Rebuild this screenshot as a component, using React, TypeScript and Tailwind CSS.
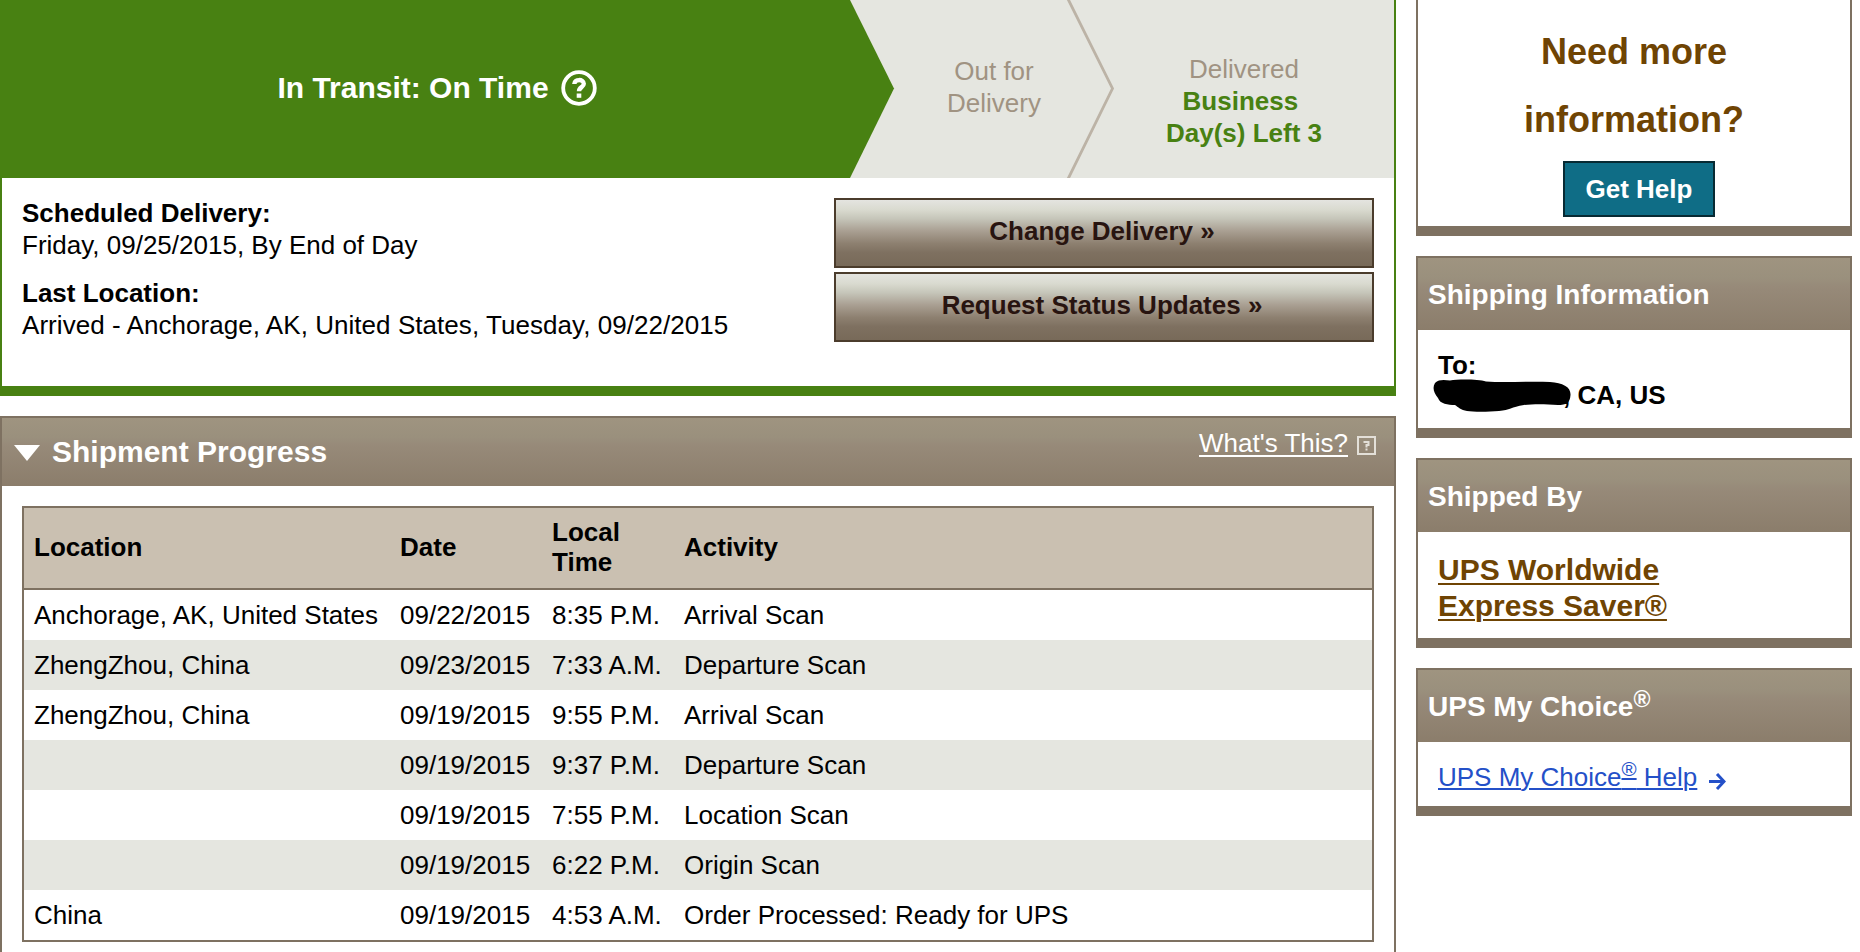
import React from 'react';
import clsx from 'clsx';

interface Scan {
    location?: string;
    date: string;
    time: string;
    activity: string;
}

const scans: Scan[] = [
    { location: 'Anchorage, AK, United States', date: '09/22/2015', time: '8:35 P.M.', activity: 'Arrival Scan' },
    { location: 'ZhengZhou, China', date: '09/23/2015', time: '7:33 A.M.', activity: 'Departure Scan' },
    { location: 'ZhengZhou, China', date: '09/19/2015', time: '9:55 P.M.', activity: 'Arrival Scan' },
    { date: '09/19/2015', time: '9:37 P.M.', activity: 'Departure Scan' },
    { date: '09/19/2015', time: '7:55 P.M.', activity: 'Location Scan' },
    { date: '09/19/2015', time: '6:22 P.M.', activity: 'Origin Scan' },
    { location: 'China', date: '09/19/2015', time: '4:53 A.M.', activity: 'Order Processed: Ready for UPS' },
];

const GradientButton = ({ label }: { label: string }) => (
    <button className="h-[70px] w-full border-2 border-[#4b3c2c] bg-[linear-gradient(#e4e4e0_0%,#d9dacf_15%,#c6c6ba_28%,#a99f92_47%,#8d8070_66%,#7e7060_80%,#786a59_100%)] pr-1 pb-1 text-center font-bold text-[#281410]">
        {label}
    </button>
);

const StatusBar = () => (
    <div className="relative flex h-[178px] bg-[#e5e6e0]">
        <svg className="absolute inset-0" width="1392" height="178" viewBox="0 0 1392 178">
            <path d="M0 0H848L892 88.5L848 178H0Z" fill="#488112" />
            <path d="M1065.500 -2L1110.500 88.500L1065.500 180" fill="none" stroke="#bcb3a6" strokeWidth="2.800" />
        </svg>
        <div className="relative flex w-[892px] items-center justify-center pr-[22px] pb-[3px] text-[30px] font-bold text-white">
            <span>In Transit: On Time</span>
            <svg className="ml-3" width="36" height="36" viewBox="0 0 36 36" fill="none" stroke="#fff">
                <circle cx="18" cy="18" r="15.800" strokeWidth="3.800" />
                <path d="M13.300 14C13.300 8.800 22.800 8.800 22.800 13.800C22.800 17.300 18 17 18 21.200" strokeWidth="4.400" />
                <path d="M18 23.500V27.800" strokeWidth="4.600" />
            </svg>
        </div>
        <div className="relative w-[200px] pt-[55px] text-center text-[#a09382]">
            Out for
            <br />
            Delivery
        </div>
        <div className="relative w-[300px] pt-[53px] text-center text-[#a09382]">
            Delivered
            <div className="font-bold text-[#488112]">
                Business&nbsp;
                <br />
                Day(s) Left 3
            </div>
        </div>
    </div>
);

const Summary = () => (
    <section className="h-[396px] border-x-2 border-b-[10px] border-[#488112]">
        <StatusBar />
        <div className="flex justify-between pl-5 pr-5">
            <div className="pt-[19px]">
                <p className="font-bold">Scheduled Delivery:</p>
                <p>Friday, 09/25/2015, By End of Day</p>
                <p className="mt-4 font-bold">Last Location:</p>
                <p className="tracking-[0.05px]">Arrived - Anchorage, AK, United States, Tuesday, 09/22/2015</p>
            </div>
            <div className="flex w-[540px] flex-col gap-1 pt-5">
                <GradientButton label="Change Delivery »" />
                <GradientButton label="Request Status Updates »" />
            </div>
        </div>
    </section>
);

const Progress = () => (
    <section className="mt-5 h-[560px] border-2 border-[#7e7161]">
        <header className="flex h-[68px] justify-between bg-[linear-gradient(#9f9480_0%,#9a907d_28%,#978a79_40%,#8b7d6b_100%)] pl-3 pr-[18px] text-white">
            <div className="flex items-center">
                <svg className="mt-px" width="26" height="16" viewBox="0 0 26 16">
                    <path d="M0 0H26L13 16Z" fill="#fff" />
                </svg>
                <h2 className="ml-3 text-[30px] font-bold">Shipment Progress</h2>
            </div>
            <div className="flex items-start pt-[9px]">
                <a className="underline decoration-2 underline-offset-[3px]">What's This?</a>
                <svg className="ml-[9px] mt-[9px]" width="19" height="19" viewBox="0 0 19 19" fill="none" stroke="#e3dfd8">
                    <rect x="1" y="1" width="17" height="17" strokeWidth="2" />
                    <path d="M6.500 6H11.500V9H9.500V11.500" strokeWidth="2" />
                    <path d="M9.500 12.500V14.500" strokeWidth="2" />
                </svg>
            </div>
        </header>
        <div className="px-5 pt-5">
            <table className="w-full table-fixed border-separate border-spacing-0 border-2 border-[#7e7161]">
                <thead>
                    <tr className="h-[82px] bg-[#cac0b1] text-left leading-[30px]">
                        <th className="w-[376px] border-b-2 border-[#7e7161] pb-0.5 pl-2.5">Location</th>
                        <th className="w-[152px] border-b-2 border-[#7e7161] pb-0.5">Date</th>
                        <th className="w-[132px] border-b-2 border-[#7e7161] pb-0.5">
                            Local
                            <br />
                            Time
                        </th>
                        <th className="border-b-2 border-[#7e7161] pb-0.5">Activity</th>
                    </tr>
                </thead>
                <tbody>
                    {scans.map((scan, i) => (
                        <tr key={i} className={clsx('h-[50px]', i % 2 === 1 && 'bg-[#e5e6e0]')}>
                            <td className="pl-2.5">{scan.location}</td>
                            <td>{scan.date}</td>
                            <td>{scan.time}</td>
                            <td>{scan.activity}</td>
                        </tr>
                    ))}
                </tbody>
            </table>
        </div>
    </section>
);

interface SidePanelProps {
    title: React.ReactNode;
    className?: string;
    children: React.ReactNode;
}

const SidePanel: React.FC<SidePanelProps> = ({ title, className, children }) => (
    <section className={clsx('mt-5 border-2 border-b-[10px] border-[#7e7161]', className)}>
        <h2 className="flex h-[72px] items-center bg-[linear-gradient(#9f9480_0%,#9a907d_28%,#978a79_40%,#8b7d6b_100%)] pt-0.5 pl-2.5 text-[28px] font-bold text-white">
            <span>{title}</span>
        </h2>
        <div className="pl-5">{children}</div>
    </section>
);

const Sidebar = () => (
    <aside className="w-[436px]">
        <section className="flex h-[236px] flex-col items-center border-x-2 border-b-[10px] border-[#7e7161]">
            <h2 className="w-[280px] pt-[18px] text-center text-[36px] leading-[68px] font-bold text-[#6f4403]">
                Need more information?
            </h2>
            <button className="ml-2.5 mt-[7px] h-14 w-[152px] shrink-0 border-2 border-[#072a33] bg-[#0f6d86] font-bold text-white">
                Get Help
            </button>
        </section>
        <SidePanel title="Shipping Information" className="h-[182px]">
            <div className="relative pt-5 leading-[30px] font-bold">
                To:
                <div className="pl-[125px]">, CA, US</div>
                {/* marker scribble over the city name */}
                <svg className="absolute top-[49px] -left-[5px]" width="140" height="36" viewBox="0 0 140 36">
                    <path
                        d="M2 4C6 0 12 1 17 1.500C25 0 45 0 53 2.500C72 4 95 2 117 3C130 4 138 8 137.500 16C137 24 133 26 125 26C112 25 100 25 91 26C78 28 77 31 66 32C55 33 40 33 34 32C28 31 25 28 22 26C15 26 7 25 5 19C1 14 -1 9 2 4Z"
                        fill="#000"
                    />
                </svg>
            </div>
        </SidePanel>
        <SidePanel title="Shipped By" className="h-[190px]">
            <a className="mt-5 block w-60 text-[30px] leading-9 font-bold text-[#6f4403] underline decoration-2 underline-offset-[3px]">
                UPS Worldwide Express Saver®
            </a>
        </SidePanel>
        <SidePanel
            title={
                <>
                    UPS My Choice<sup className="top-[-9px] text-[23px]">®</sup>
                </>
            }
            className="h-[148px]"
        >
            <div className="flex items-center pt-[19px] text-[#2450c8]">
                <a className="underline decoration-2 underline-offset-2">
                    UPS My Choice<sup className="top-[-10px] text-[20.5px] underline">®</sup> Help
                </a>
                <svg className="ml-3 mt-2" width="17" height="17" viewBox="0 0 17 17" fill="none" stroke="#2450c8" strokeWidth="3">
                    <path d="M0 8.500H15M8 1L15 8.500L8 16" />
                </svg>
            </div>
        </SidePanel>
    </aside>
);

const App = () => (
    <div className="flex h-[952px] w-[1860px] items-start gap-5 overflow-hidden bg-white font-['Liberation_Sans',Arial,sans-serif] text-[26px] leading-8 text-black">
        <main className="w-[1396px]">
            <Summary />
            <Progress />
        </main>
        <Sidebar />
    </div>
);

export default App;
